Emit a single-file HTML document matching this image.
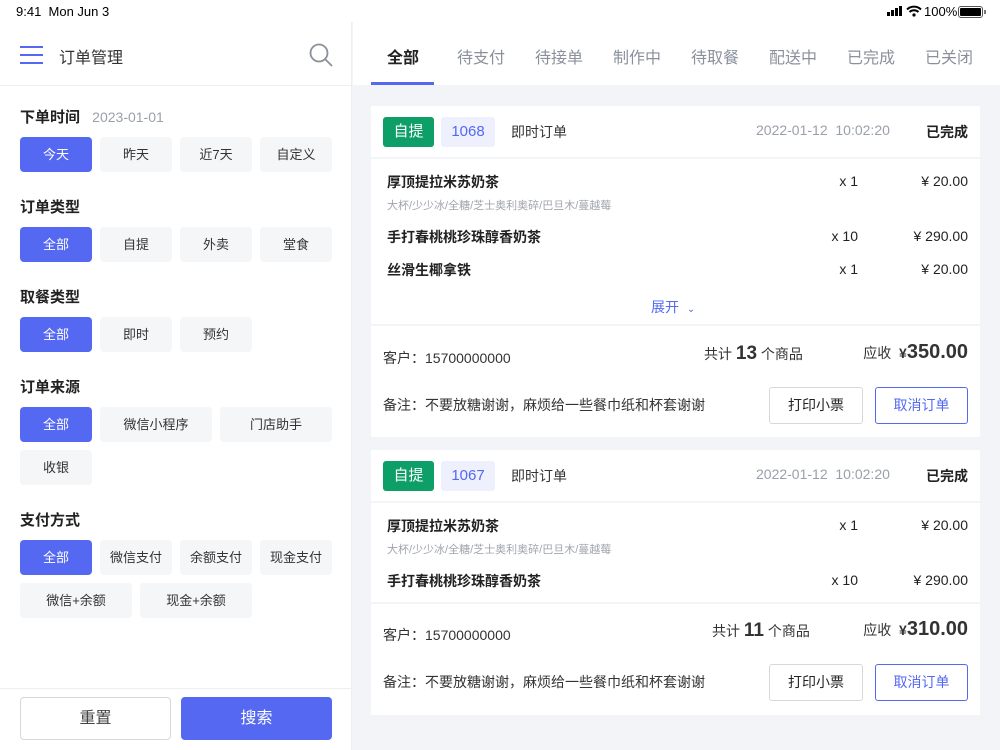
<!DOCTYPE html>
<html><head><meta charset="utf-8"><style>
*{margin:0;padding:0;box-sizing:border-box}
body{width:1000px;height:750px;overflow:hidden;background:#f2f4f7;font-family:"Liberation Sans","Noto Sans CJK SC",sans-serif;color:#222;position:relative}
.a{position:absolute}
.left{left:0;top:0;width:352px;height:750px;background:#fff;border-right:1px solid #eceef2}
.btn{position:absolute;height:35px;border-radius:4px;background:#f5f6f8;color:#333;font-size:13px;text-align:center;line-height:35px}
.on{background:#5468f2;color:#fff}
.lbl{position:absolute;left:20px;font-size:15px;font-weight:bold;color:#222}
.tab{position:absolute;top:44px;font-size:16px;color:#8a909c}
.card{position:absolute;left:371px;width:609px;background:#fff}
.hr{position:absolute;left:0;width:609px;height:2px;background:#f2f4f7}
.t{position:absolute;white-space:nowrap}
.sb{z-index:5}
</style></head><body>
<div class="a left">
 <div class="a" style="left:20px;top:46px;width:23px;height:2px;background:#5468f2"></div>
 <div class="a" style="left:20px;top:54px;width:23px;height:2px;background:#5468f2"></div>
 <div class="a" style="left:20px;top:62px;width:23px;height:2px;background:#5468f2"></div>
 <div class="t" style="left:59px;top:44px;font-size:16px;color:#333">订单管理</div>
 <svg class="a" style="left:308px;top:42px" width="26" height="26" viewBox="0 0 26 26"><circle cx="11" cy="11" r="8.5" stroke="#8a8f99" stroke-width="1.8" fill="none"/><path d="M17.5 17.5L24 24" stroke="#8a8f99" stroke-width="1.8"/></svg>
 <div class="a" style="left:0;top:85px;width:352px;height:1px;background:#eceef2"></div>
 <div class="lbl" style="top:106px">下单时间 <span style="font-weight:normal;color:#9aa0aa;font-size:14px;margin-left:8px">2023-01-01</span></div>
 <div class="btn on" style="left:20px;top:137px;width:72px">今天</div>
 <div class="btn" style="left:100px;top:137px;width:72px">昨天</div>
 <div class="btn" style="left:180px;top:137px;width:72px">近7天</div>
 <div class="btn" style="left:260px;top:137px;width:72px">自定义</div>
 <div class="lbl" style="top:196px">订单类型</div>
 <div class="btn on" style="left:20px;top:227px;width:72px">全部</div>
 <div class="btn" style="left:100px;top:227px;width:72px">自提</div>
 <div class="btn" style="left:180px;top:227px;width:72px">外卖</div>
 <div class="btn" style="left:260px;top:227px;width:72px">堂食</div>
 <div class="lbl" style="top:286px">取餐类型</div>
 <div class="btn on" style="left:20px;top:317px;width:72px">全部</div>
 <div class="btn" style="left:100px;top:317px;width:72px">即时</div>
 <div class="btn" style="left:180px;top:317px;width:72px">预约</div>
 <div class="lbl" style="top:376px">订单来源</div>
 <div class="btn on" style="left:20px;top:407px;width:72px">全部</div>
 <div class="btn" style="left:100px;top:407px;width:112px">微信小程序</div>
 <div class="btn" style="left:220px;top:407px;width:112px">门店助手</div>
 <div class="btn" style="left:20px;top:450px;width:72px">收银</div>
 <div class="lbl" style="top:509px">支付方式</div>
 <div class="btn on" style="left:20px;top:540px;width:72px">全部</div>
 <div class="btn" style="left:100px;top:540px;width:72px">微信支付</div>
 <div class="btn" style="left:180px;top:540px;width:72px">余额支付</div>
 <div class="btn" style="left:260px;top:540px;width:72px">现金支付</div>
 <div class="btn" style="left:20px;top:583px;width:112px">微信+余额</div>
 <div class="btn" style="left:140px;top:583px;width:112px">现金+余额</div>
 <div class="a" style="left:0;top:688px;width:352px;height:1px;background:#eceef2"></div>
 <div class="a" style="left:20px;top:697px;width:151px;height:43px;border:1px solid #d6d8dd;border-radius:4px;text-align:center;line-height:41px;font-size:16px;color:#444">重置</div>
 <div class="a" style="left:181px;top:697px;width:151px;height:43px;background:#5468f2;border-radius:4px;text-align:center;line-height:43px;font-size:16px;color:#fff">搜索</div>
</div>

<div class="a" style="left:0;top:0;width:1000px;height:22px;background:#fff;z-index:4"></div>
<div class="t sb" style="left:16px;top:4px;font-size:13px;color:#000">9:41&nbsp; Mon Jun 3</div>
<div class="t sb" style="left:887px;top:5px;width:20px;height:12px">
<div class="a" style="left:0;top:7px;width:3px;height:4px;background:#000"></div>
<div class="a" style="left:4px;top:5px;width:3px;height:6px;background:#000"></div>
<div class="a" style="left:8px;top:3px;width:3px;height:8px;background:#000"></div>
<div class="a" style="left:12px;top:1px;width:3px;height:10px;background:#000"></div></div>
<svg class="a sb" style="left:906px;top:5px" width="16" height="12" viewBox="0 0 16 12"><path d="M1 4.5a10 10 0 0 1 14 0M3.5 7a6.5 6.5 0 0 1 9 0" stroke="#000" stroke-width="2" fill="none"/><circle cx="8" cy="10" r="1.6"/></svg>
<div class="t sb" style="left:924px;top:4px;font-size:13px;color:#000">100%</div>
<div class="a sb" style="left:958px;top:6px;width:25px;height:12px;border:1px solid #555;border-radius:3px;padding:1px"><div style="width:100%;height:100%;background:#000;border-radius:1px"></div></div>
<div class="a sb" style="left:984px;top:10px;width:2px;height:4px;background:#777"></div>

<div class="a" style="left:353px;top:22px;width:647px;height:63px;background:#fff"></div>
<div class="tab" style="left:387px;color:#222;font-weight:bold">全部</div>
<div class="a" style="left:371px;top:82px;width:63px;height:3px;background:#5468f2"></div>
<div class="tab" style="left:457px">待支付</div>
<div class="tab" style="left:535px">待接单</div>
<div class="tab" style="left:613px">制作中</div>
<div class="tab" style="left:691px">待取餐</div>
<div class="tab" style="left:769px">配送中</div>
<div class="tab" style="left:847px">已完成</div>
<div class="tab" style="left:925px">已关闭</div>

<div class="card" style="top:106px;height:331px">
 <div class="a" style="left:12px;top:11px;width:51px;height:30px;background:#0e9f69;border-radius:3px;color:#fff;font-size:15px;text-align:center;line-height:30px">自提</div>
 <div class="a" style="left:70px;top:11px;width:54px;height:30px;background:#eef0fd;border-radius:3px;color:#5468f2;font-size:15px;text-align:center;line-height:30px">1068</div>
 <div class="t" style="left:140px;top:16px;font-size:14px;color:#333">即时订单</div>
 <div class="t" style="left:385px;top:16px;font-size:14px;color:#9aa0aa">2022-01-12&nbsp; 10:02:20</div>
 <div class="t" style="right:12px;top:16px;font-size:14px;font-weight:bold">已完成</div>
 <div class="hr" style="top:51px"></div>
 <div class="t" style="left:16px;top:66px;font-size:14px;font-weight:bold">厚顶提拉米苏奶茶</div>
 <div class="t" style="left:16px;top:91px;font-size:11px;color:#a0a4ad">大杯/少少冰/全糖/芝士奥利奥碎/巴旦木/蔓越莓</div>
 <div class="t" style="right:122px;top:67px;font-size:14px">x 1</div>
 <div class="t" style="right:12px;top:67px;font-size:14px">¥ 20.00</div>
 <div class="t" style="left:16px;top:121px;font-size:14px;font-weight:bold">手打春桃桃珍珠醇香奶茶</div>
 <div class="t" style="right:122px;top:122px;font-size:14px">x 10</div>
 <div class="t" style="right:12px;top:122px;font-size:14px">¥ 290.00</div>
 <div class="t" style="left:16px;top:154px;font-size:14px;font-weight:bold">丝滑生椰拿铁</div>
 <div class="t" style="right:122px;top:155px;font-size:14px">x 1</div>
 <div class="t" style="right:12px;top:155px;font-size:14px">¥ 20.00</div>
 <div class="t" style="left:280px;top:191px;font-size:14px;color:#5468f2">展开 <span style="font-size:10px;margin-left:4px">⌄</span></div>
 <div class="hr" style="top:218px"></div>
 <div class="t" style="left:12px;top:242px;font-size:14px;color:#333">客户：15700000000</div>
 <div class="t" style="left:333px;top:237px;font-size:14px;color:#333">共计 <b style="font-size:19px">13</b> 个商品</div>
 <div class="t" style="right:12px;top:235px;font-size:14px;color:#333">应收&nbsp; <b style="font-size:14px">¥</b><b style="font-size:20px">350.00</b></div>
 <div class="t" style="left:12px;top:289px;font-size:14px;color:#333">备注：不要放糖谢谢，麻烦给一些餐巾纸和杯套谢谢</div>
 <div class="a" style="left:398px;top:281px;width:94px;height:37px;border:1px solid #d6d8dd;border-radius:3px;text-align:center;line-height:35px;font-size:14px">打印小票</div>
 <div class="a" style="left:504px;top:281px;width:93px;height:37px;border:1px solid #5468f2;border-radius:3px;text-align:center;line-height:35px;font-size:14px;color:#5468f2">取消订单</div>
</div>

<div class="card" style="top:450px;height:265px">
 <div class="a" style="left:12px;top:11px;width:51px;height:30px;background:#0e9f69;border-radius:3px;color:#fff;font-size:15px;text-align:center;line-height:30px">自提</div>
 <div class="a" style="left:70px;top:11px;width:54px;height:30px;background:#eef0fd;border-radius:3px;color:#5468f2;font-size:15px;text-align:center;line-height:30px">1067</div>
 <div class="t" style="left:140px;top:16px;font-size:14px;color:#333">即时订单</div>
 <div class="t" style="left:385px;top:16px;font-size:14px;color:#9aa0aa">2022-01-12&nbsp; 10:02:20</div>
 <div class="t" style="right:12px;top:16px;font-size:14px;font-weight:bold">已完成</div>
 <div class="hr" style="top:51px"></div>
 <div class="t" style="left:16px;top:66px;font-size:14px;font-weight:bold">厚顶提拉米苏奶茶</div>
 <div class="t" style="left:16px;top:91px;font-size:11px;color:#a0a4ad">大杯/少少冰/全糖/芝士奥利奥碎/巴旦木/蔓越莓</div>
 <div class="t" style="right:122px;top:67px;font-size:14px">x 1</div>
 <div class="t" style="right:12px;top:67px;font-size:14px">¥ 20.00</div>
 <div class="t" style="left:16px;top:121px;font-size:14px;font-weight:bold">手打春桃桃珍珠醇香奶茶</div>
 <div class="t" style="right:122px;top:122px;font-size:14px">x 10</div>
 <div class="t" style="right:12px;top:122px;font-size:14px">¥ 290.00</div>
 <div class="hr" style="top:152px"></div>
 <div class="t" style="left:12px;top:175px;font-size:14px;color:#333">客户：15700000000</div>
 <div class="t" style="left:341px;top:170px;font-size:14px;color:#333">共计 <b style="font-size:19px">11</b> 个商品</div>
 <div class="t" style="right:12px;top:168px;font-size:14px;color:#333">应收&nbsp; <b style="font-size:14px">¥</b><b style="font-size:20px">310.00</b></div>
 <div class="t" style="left:12px;top:222px;font-size:14px;color:#333">备注：不要放糖谢谢，麻烦给一些餐巾纸和杯套谢谢</div>
 <div class="a" style="left:398px;top:214px;width:94px;height:37px;border:1px solid #d6d8dd;border-radius:3px;text-align:center;line-height:35px;font-size:14px">打印小票</div>
 <div class="a" style="left:504px;top:214px;width:93px;height:37px;border:1px solid #5468f2;border-radius:3px;text-align:center;line-height:35px;font-size:14px;color:#5468f2">取消订单</div>
</div>
</body></html>
